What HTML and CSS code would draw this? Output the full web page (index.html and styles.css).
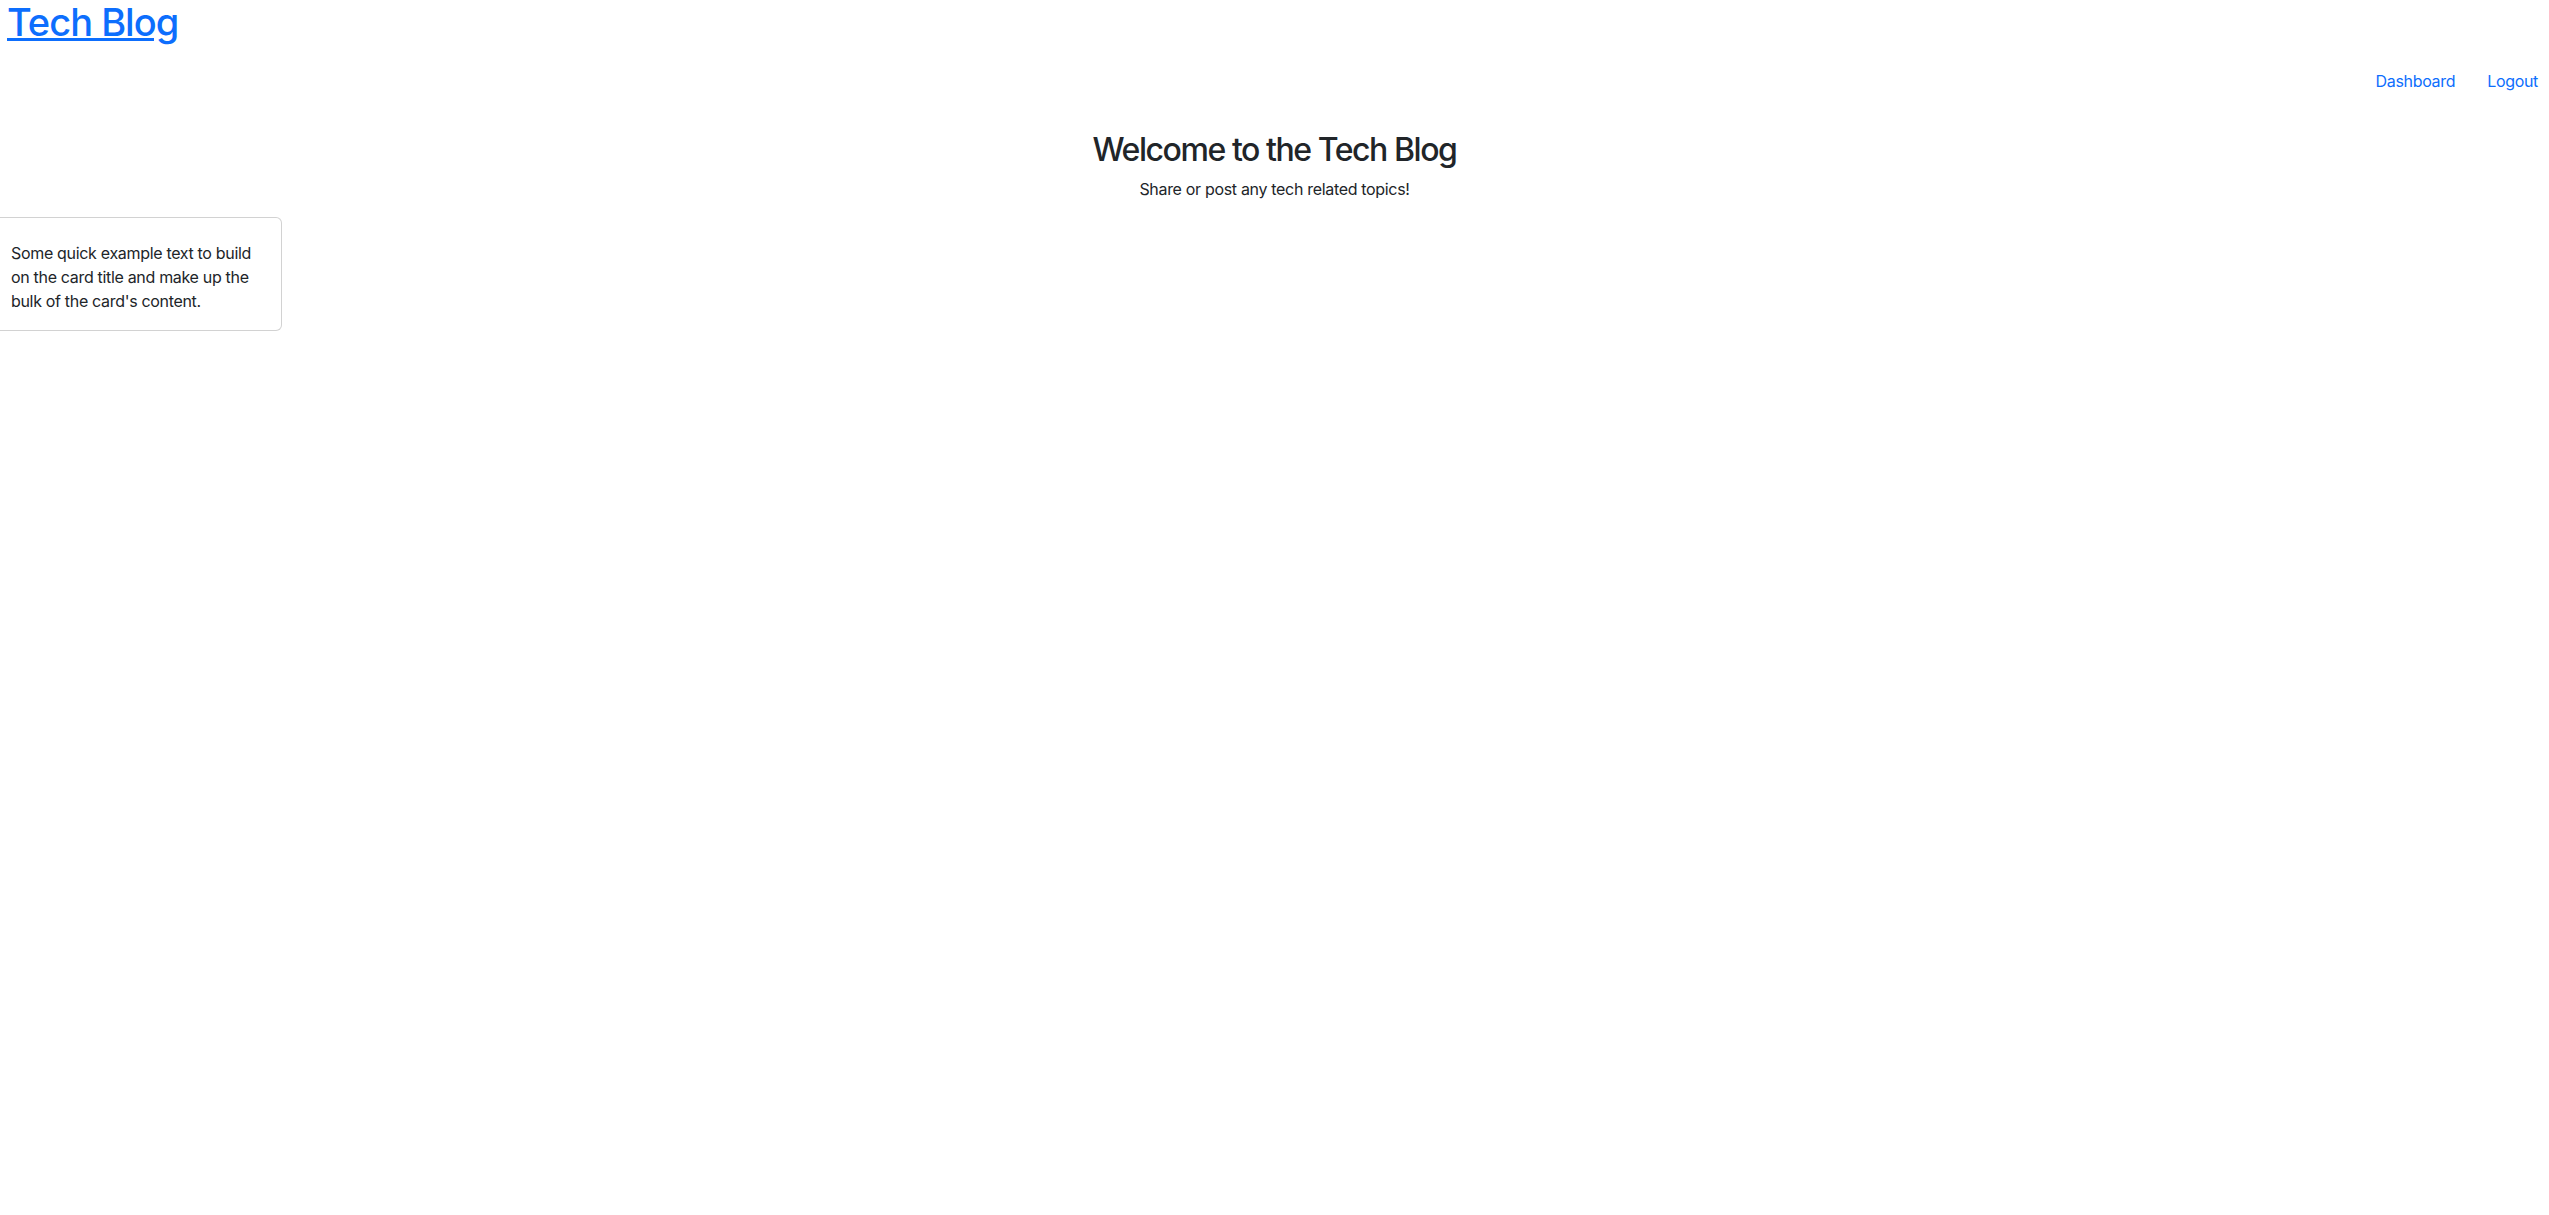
FILE: index.html
```html
<!DOCTYPE html>
<html lang="en">
<head>
<meta charset="utf-8">
<title>Tech Blog</title>
<link rel="stylesheet" href="styles.css">
</head>
<body>
<header class="site-header">
  <h1 class="brand"><a href="#" class="brand-link">Tech Blog</a></h1>
  <nav class="site-nav">
    <ul class="nav-list">
      <li><a href="#" class="nav-link">Dashboard</a></li>
      <li><a href="#" class="nav-link">Logout</a></li>
    </ul>
  </nav>
</header>
<main class="main">
  <section class="hero">
    <h2 class="hero-title">Welcome to the Tech Blog</h2>
    <p class="hero-sub">Share or post any tech related topics!</p>
  </section>
  <div class="posts">
    <div class="card">
      <div class="card-body">
        <h5 class="card-title"></h5>
        <p class="card-text">Some quick example text to build on the card title and make up the bulk of the card's content.</p>
      </div>
    </div>
  </div>
</main>
</body>
</html>
```
FILE: styles.css
```css
* { box-sizing: border-box; }
html, body {
  margin: 0;
  padding: 0;
  background: #fff;
}
body {
  font-family: Inter, "Liberation Sans", Arial, sans-serif;
  font-size: 16px;
  line-height: 1.5;
  color: #212529;
  letter-spacing: -0.02em;
}
.site-header {
  display: flex;
  flex-direction: column;
}
.brand {
  margin: 0 0 15px 7px;
  font-size: 38px;
  font-weight: 500;
  line-height: 1.2;
  letter-spacing: -0.026em;
}
.brand-link {
  color: #0d6efd;
  text-decoration: underline;
}
.site-nav {
  display: flex;
  justify-content: flex-end;
}
.nav-list {
  list-style: none;
  margin: 0 -5px 0 0;
  padding: 0;
  display: flex;
}
.nav-link {
  display: block;
  padding: 8px 16px;
  color: #0d6efd;
  text-decoration: none;
}
.main {
  display: flex;
  flex-direction: column;
}
.hero {
  text-align: center;
  padding-top: 30px;
}
.hero-title {
  margin: 0 0 8px;
  font-size: 32px;
  font-weight: 500;
  line-height: 1.2;
  letter-spacing: -0.045em;
}
.hero-sub {
  margin: 0 0 16px;
}
.posts {
  display: flex;
  margin-left: -6px;
}
.card {
  width: 288px;
  border: 1px solid rgba(0, 0, 0, 0.175);
  border-radius: 6px;
  background: #fff;
}
.card-body {
  padding: 15px 16px 17px;
}
.card-title {
  margin: 0 0 8px;
  font-size: 20px;
  font-weight: 500;
  line-height: 1.2;
}
.card-text {
  margin: 0;
}
```
